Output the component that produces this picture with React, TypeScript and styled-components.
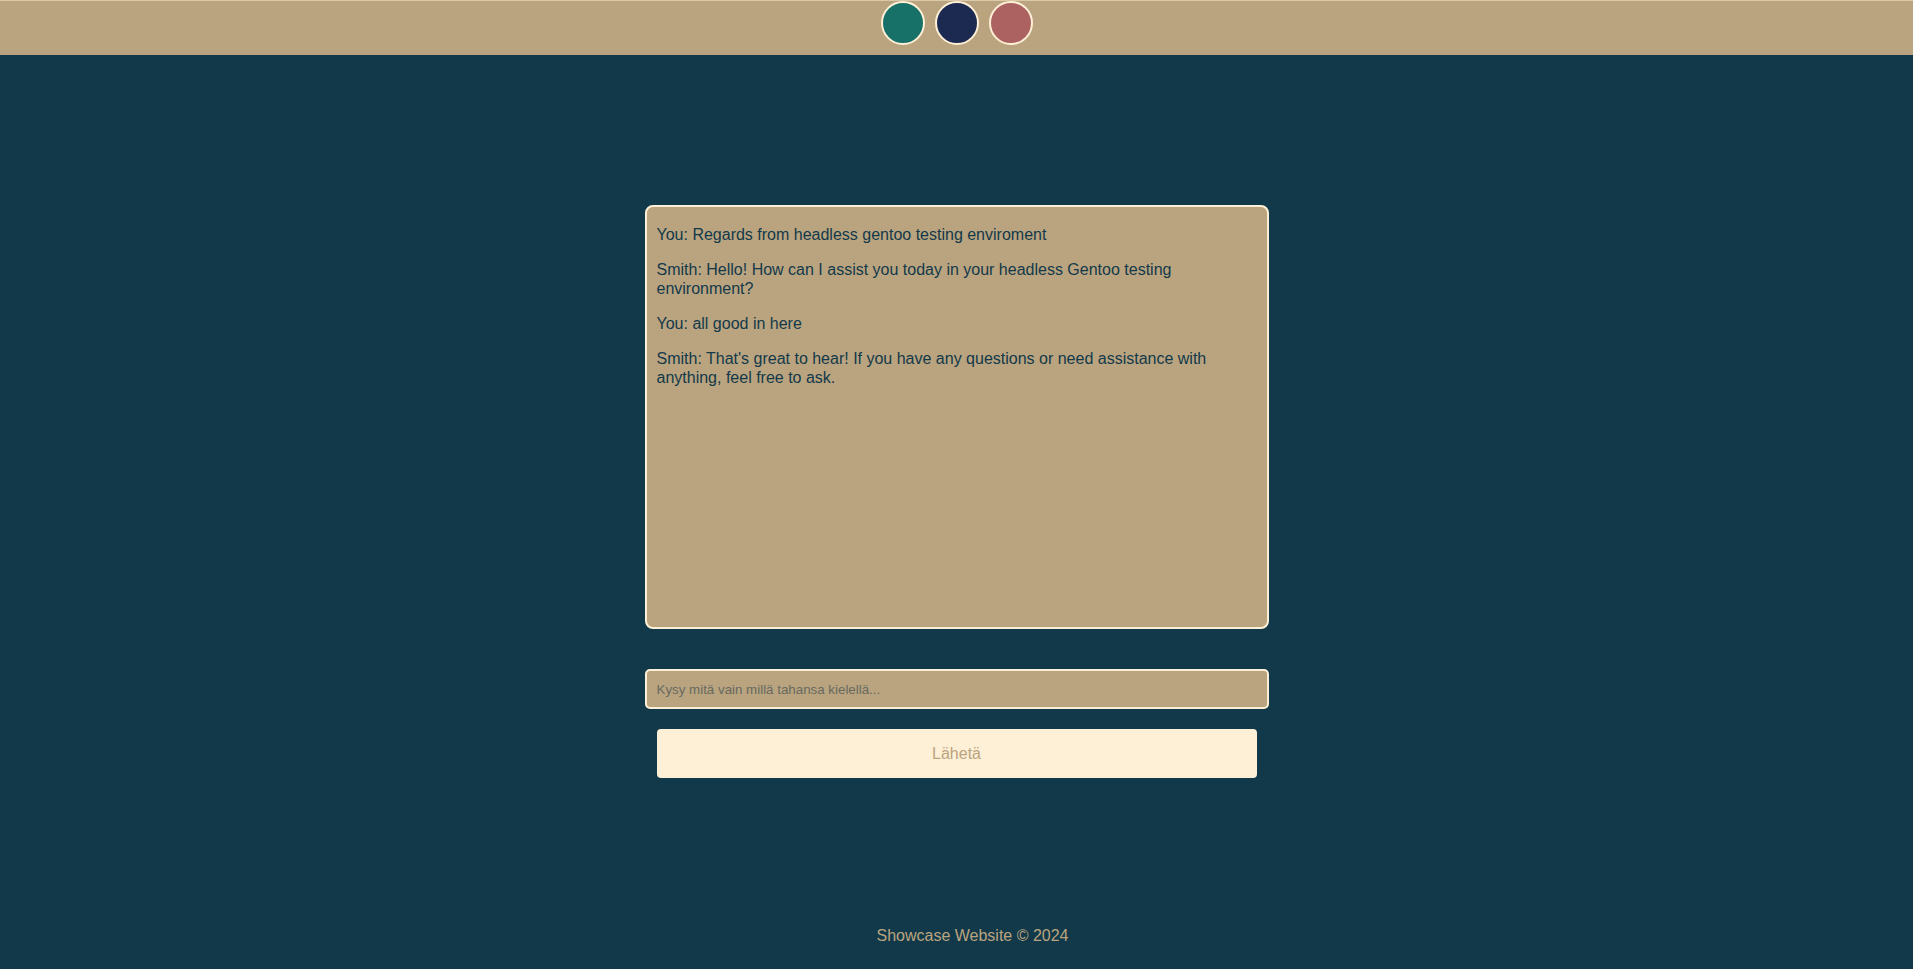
import React, { useState } from 'react';
import styled, { createGlobalStyle } from 'styled-components';

const GlobalStyle = createGlobalStyle`
	body {
		margin: 0;
		background: #12394a;
		font-family: 'Liberation Sans', Arial, sans-serif;
	}
`;

const Page = styled.div`
	min-height: 100vh;
	display: flex;
	flex-direction: column;
`;

const Header = styled.header`
	height: 55px;
	box-sizing: border-box;
	background: #baa47f;
	border-top: 1px solid #d9c9a6;
	display: flex;
	justify-content: center;
	align-items: flex-start;
	gap: 10px;
`;

const ThemeDot = styled.button<{ $color: string }>`
	width: 44px;
	height: 44px;
	padding: 0;
	border-radius: 50%;
	border: 2px solid #fef0d6;
	background: ${props => props.$color};
	cursor: pointer;
`;

const Main = styled.main`
	flex: 1;
	display: flex;
	flex-direction: column;
	align-items: center;
	padding-top: 150px;
`;

const ChatBox = styled.div`
	width: 624px;
	height: 424px;
	box-sizing: border-box;
	background: #baa47f;
	border: 2px solid #fef0d6;
	border-radius: 8px;
	padding: 2px 10px 0;
	overflow-y: auto;
	color: #12394a;
	font-size: 16px;

	p {
		margin: 16px 0;
		line-height: 19px;
	}
`;

const ChatInput = styled.input`
	margin-top: 40px;
	width: 624px;
	height: 40px;
	box-sizing: border-box;
	background: #baa47f;
	border: 2px solid #fef0d6;
	border-radius: 5px;
	padding: 0 10px;
	font-family: 'Liberation Sans', Arial, sans-serif;
	font-size: 13.33px;
	color: #12394a;
	outline: none;

	&::placeholder {
		color: #67695f;
	}
`;

const SendButton = styled.button`
	margin-top: 20px;
	width: 600px;
	height: 49px;
	background: #fef0d6;
	border: none;
	border-radius: 4px;
	color: #baa47f;
	font-family: 'Liberation Sans', Arial, sans-serif;
	font-size: 16px;
	cursor: pointer;
`;

const Footer = styled.footer`
	text-align: center;
	color: #baa47f;
	font-size: 16px;
	padding: 0 0 24px 32px;
`;

const themes = ['#187168', '#1c2a52', '#ad6262'];

const messages = [
	'You: Regards from headless gentoo testing enviroment',
	'Smith: Hello! How can I assist you today in your headless Gentoo testing environment?',
	'You: all good in here',
	"Smith: That's great to hear! If you have any questions or need assistance with anything, feel free to ask."
];

export default function App() {
	const [text, setText] = useState('');

	return (
		<Page>
			<GlobalStyle />
			<Header>
				{themes.map(c => (
					<ThemeDot key={c} $color={c} />
				))}
			</Header>
			<Main>
				<ChatBox>
					{messages.map((m, i) => (
						<p key={i}>{m}</p>
					))}
				</ChatBox>
				<ChatInput
					value={text}
					onChange={e => setText(e.target.value)}
					placeholder='Kysy mitä vain millä tahansa kielellä...'
				/>
				<SendButton>Lähetä</SendButton>
			</Main>
			<Footer>Showcase Website © 2024</Footer>
		</Page>
	);
}
